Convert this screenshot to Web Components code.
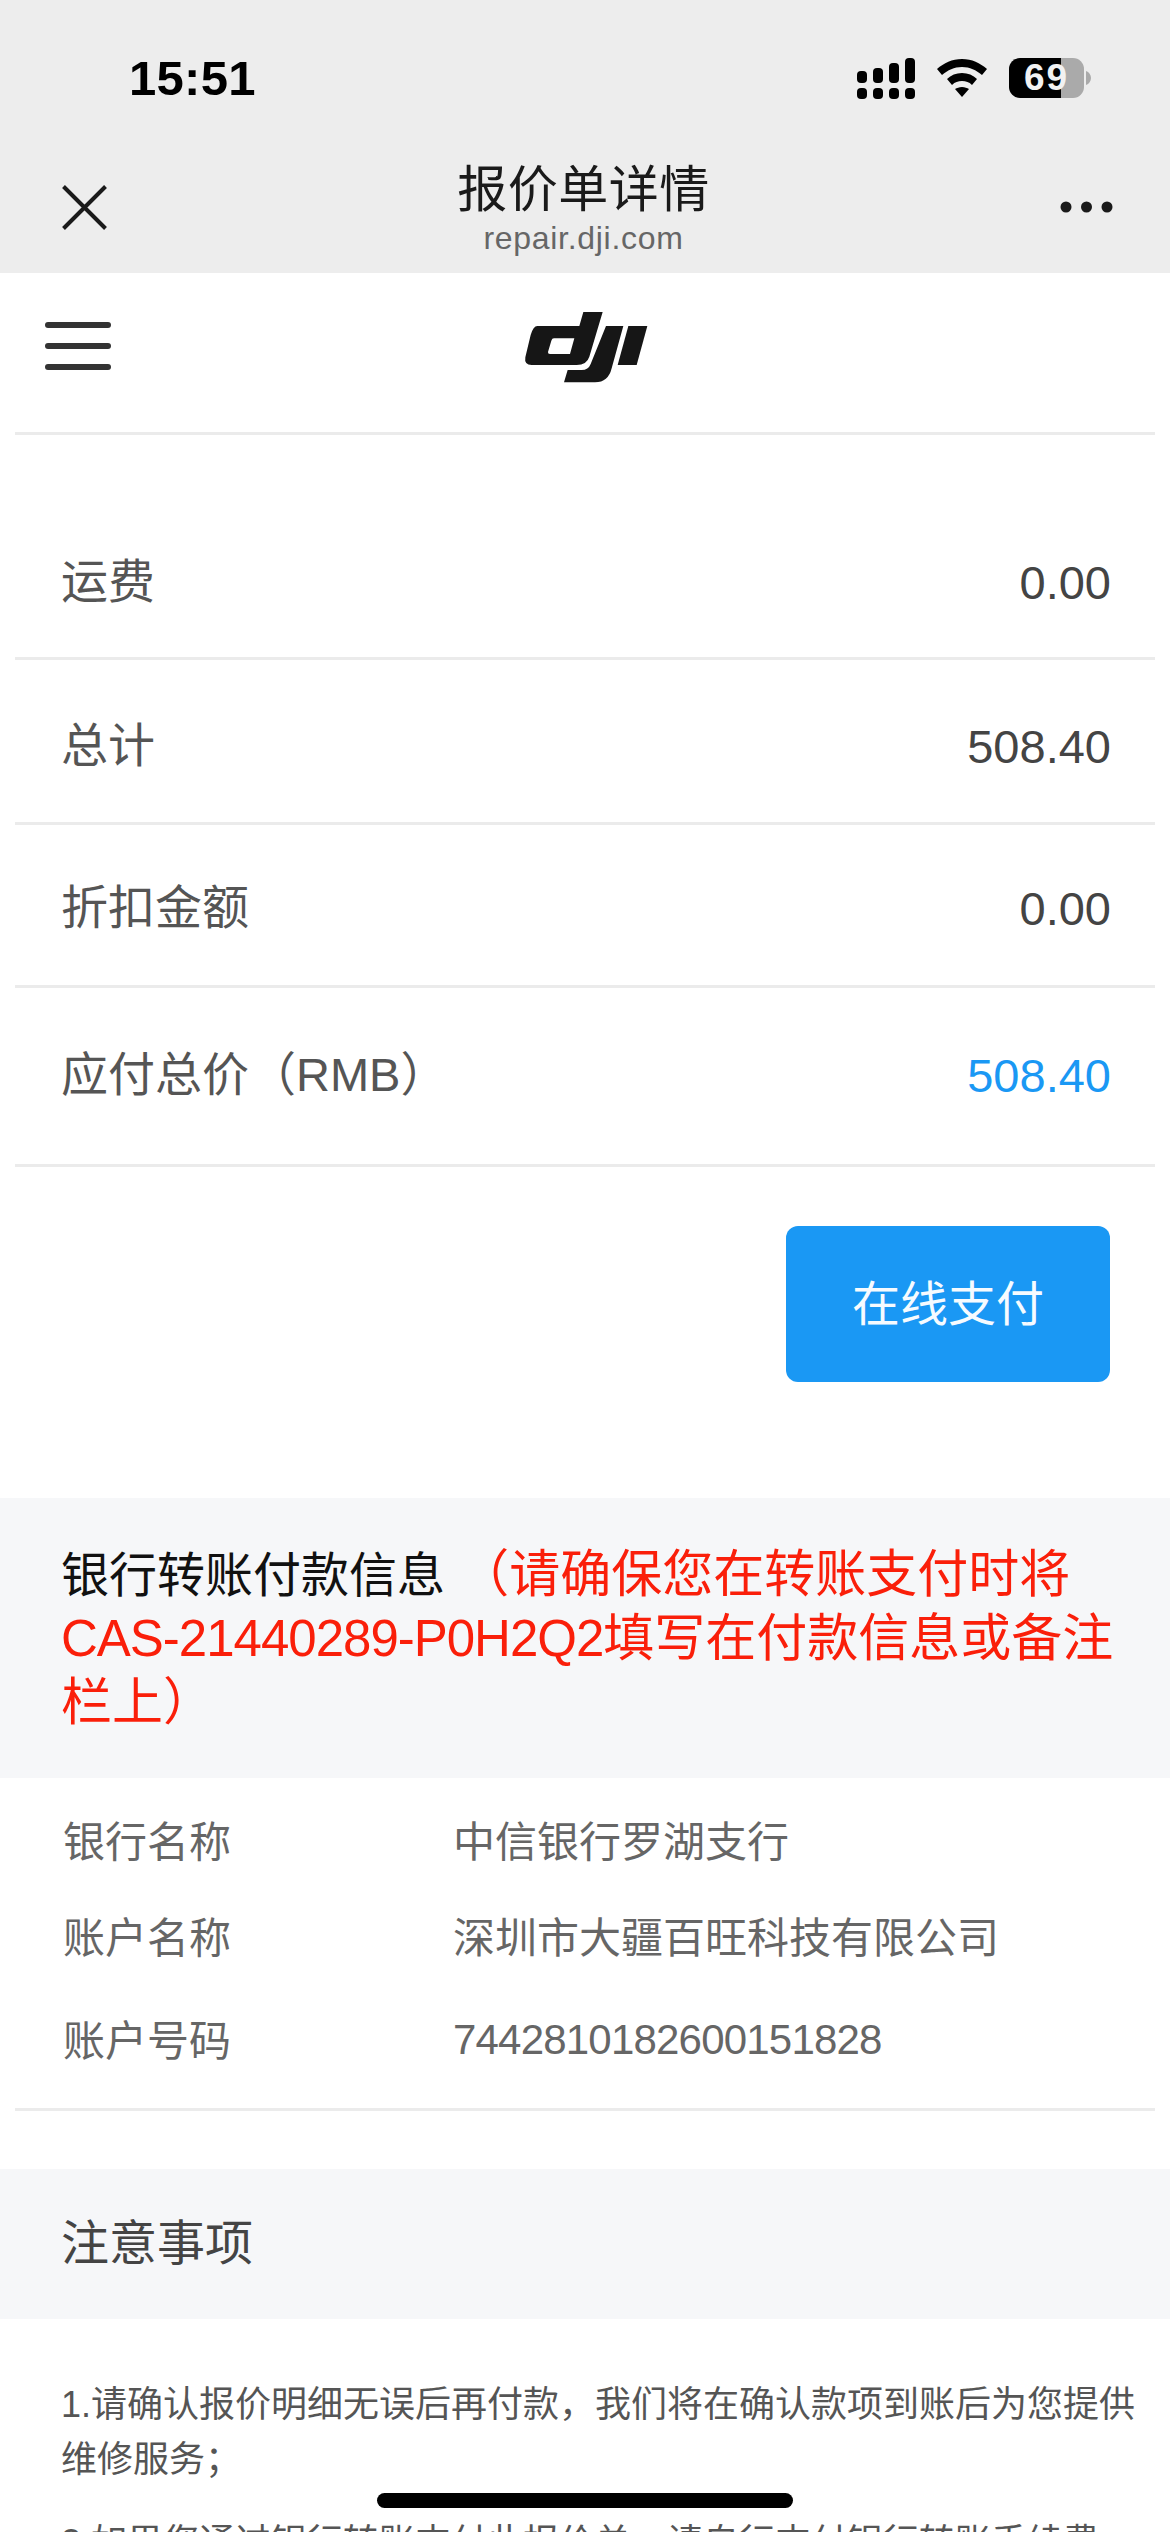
<!DOCTYPE html>
<html lang="zh">
<head>
<meta charset="utf-8">
<title>报价单详情</title>
<style>
  html, body { margin: 0; padding: 0; background: #fff; }
  body { height: 2532px; overflow: hidden; position: relative; font-family: "Liberation Sans", "Noto Sans CJK SC", sans-serif; }
</style>
</head>
<body>
<status-bar></status-bar>
<nav-bar title="报价单详情" host-name="repair.dji.com"></nav-bar>
<site-header></site-header>
<price-row label="运费" value="0.00" h="225" pt="62"></price-row>
<price-row label="总计" value="508.40" h="165"></price-row>
<price-row label="折扣金额" value="0.00" h="163" pb="4"></price-row>
<price-row label="应付总价（RMB）" value="508.40" h="179" pb="11" accent></price-row>
<pay-action>在线支付</pay-action>
<section-head style="margin-top:116px;padding-bottom:43px">
  银行转账付款信息 <span style="color:#fa1f0a;font-size:51px"><span>（请确保您在转账支付时将</span><span style="letter-spacing:-1px">CAS-21440289-P0H2Q2</span><span>填写在付款信息或备注</span><span>栏上）</span></span>
</section-head>
<bank-info></bank-info>
<section-head style="margin-top:58px;color:#444" compact>注意事项</section-head>
<notes-list>
  <p>1.请确认报价明细无误后再付款，我们将在确认款项到账后为您提供维修服务；</p>
  <p>2.如果您通过银行转账支付此报价单，请自行支付银行转账手续费</p>
</notes-list>
<home-bar></home-bar>

<script>
const FONT = `"Liberation Sans", "Noto Sans CJK SC", sans-serif`;

class StatusBar extends HTMLElement {
  constructor() {
    super();
    this.attachShadow({ mode: 'open' }).innerHTML = `
      <style>
        :host { display: flex; align-items: center; justify-content: space-between; height: 156px; box-sizing: border-box; padding: 0 79px 0 129px; background: #ededed; font-family: ${FONT}; }
        .time { font-size: 49px; font-weight: 700; color: #000; letter-spacing: .3px; }
        .icons { display: flex; align-items: center; gap: 22px; }
        .batt { width: 75px; height: 40px; border-radius: 11px; background: linear-gradient(90deg, #000 0 52px, #aaa 52px); display: flex; align-items: center; justify-content: center; color: #f2f2f2; font-size: 37px; font-weight: 700; letter-spacing: 2px; }
        .wrap { display: flex; align-items: center; gap: 2px; }
      </style>
      <span class="time">15:51</span>
      <span class="icons">
        <svg width="58" height="41" viewBox="0 0 58 41" fill="#000">
          <rect x="0" y="13" width="10" height="12" rx="4"/><rect x="16" y="10" width="10" height="15" rx="4"/><rect x="32" y="5" width="10" height="20" rx="4"/><rect x="48" y="0" width="10" height="25" rx="4"/>
          <rect x="0" y="30" width="10" height="11" rx="4"/><rect x="16" y="30" width="10" height="11" rx="4"/><rect x="32" y="30" width="10" height="11" rx="4"/><rect x="48" y="30" width="10" height="11" rx="4"/>
        </svg>
        <svg width="50" height="38" viewBox="0 0 50 38" fill="#000">
          <path d="M25 0C15 0 7 4 0 10l5 6c6-5 12-8 20-8s14 3 20 8l5-6C43 4 35 0 25 0z"/>
          <path d="M25 14c-6 0-11 2-15 6l5 6c3-3 6-4 10-4s7 1 10 4l5-6c-4-4-9-6-15-6z"/>
          <path d="M25 28c-3 0-5 1-7 2l7 8 7-8c-2-1-4-2-7-2z"/>
        </svg>
        <span class="wrap">
          <span class="batt">69</span>
          <svg width="5" height="14" viewBox="0 0 5 14"><path d="M0 0c3 1 5 4 5 7s-2 6-5 7z" fill="#aaa"/></svg>
        </span>
      </span>`;
  }
}

class NavBar extends HTMLElement {
  constructor() {
    super();
    this.attachShadow({ mode: 'open' }).innerHTML = `
      <style>
        :host { display: flex; align-items: center; justify-content: space-between; height: 117px; box-sizing: border-box; padding: 0 57px 0 62px; background: #ededed; font-family: ${FONT}; }
        .mid { flex: 1; align-self: flex-start; padding-top: 4px; display: flex; flex-direction: column; align-items: center; }
        .t { font-size: 50px; line-height: 60px; color: #1a1a1a; letter-spacing: .5px; }
        .h { font-size: 32px; line-height: 36px; color: #666; letter-spacing: .7px; }
        svg { margin-bottom: 15px; }
      </style>
      <svg width="45" height="45" viewBox="0 0 45 45"><path d="M1.5 1.5l42 42M43.5 1.5l-42 42" stroke="#1a1a1a" stroke-width="4" fill="none"/></svg>
      <div class="mid"><div class="t">${this.getAttribute('title')}</div><div class="h">${this.getAttribute('host-name')}</div></div>
      <svg width="53" height="12" viewBox="0 0 53 12" fill="#1a1a1a"><circle cx="6" cy="6" r="5.5"/><circle cx="26.5" cy="6" r="5.5"/><circle cx="47" cy="6" r="5.5"/></svg>`;
  }
}

class SiteHeader extends HTMLElement {
  constructor() {
    super();
    this.attachShadow({ mode: 'open' }).innerHTML = `
      <style>
        :host { display: block; margin: 0 15px; height: 162px; box-sizing: border-box; border-bottom: 3px solid #ebebeb; position: relative; }
        .in { display: flex; align-items: center; height: 145px; padding-left: 30px; }
        .m { display: flex; flex-direction: column; gap: 15px; }
        .m i { display: block; width: 66px; height: 6px; border-radius: 3px; background: #333; }
        .logo { position: absolute; left: 465px; top: 17px; }
      </style>
      <div class="in"><div class="m"><i></i><i></i><i></i></div></div>
      <svg class="logo" width="200" height="120" viewBox="0 0 600 360" fill="#161616">
        <path fill-rule="evenodd" d="M172 108H298L310 66H368L328 200Q320 225 290 225H155Q132 225 136 202L152 135Q160 108 172 108ZM222 145Q216 145 214 152L204 186Q203 192 210 192H270L283 145Z"/>
        <path d="M378 108H430L395 235Q385 277 345 277H252L263 240H305Q325 240 332 222Z"/>
        <path d="M445 108H502L470 225H413Z"/>
      </svg>`;
  }
}

class PriceRow extends HTMLElement {
  constructor() {
    super();
    const accent = this.hasAttribute('accent');
    this.attachShadow({ mode: 'open' }).innerHTML = `
      <style>
        :host { display: flex; justify-content: space-between; align-items: center; margin: 0 15px; padding: ${this.getAttribute('pt') || 0}px 44px ${this.getAttribute('pb') || 0}px 46px; box-sizing: border-box; height: ${this.getAttribute('h')}px; border-bottom: 3px solid #ebebeb; font-family: ${FONT}; font-size: 47px; color: #555; }
        .v { color: ${accent ? '#1a98f4' : '#444'}; margin-top: 10px; }
      </style>
      <span>${this.getAttribute('label')}</span><span class="v">${this.getAttribute('value')}</span>`;
  }
}

class PayAction extends HTMLElement {
  constructor() {
    super();
    this.attachShadow({ mode: 'open' }).innerHTML = `
      <style>
        :host { display: flex; justify-content: flex-end; padding: 59px 60px 0 0; font-family: ${FONT}; }
        .b { width: 324px; height: 156px; box-sizing: border-box; padding-bottom: 8px; border-radius: 12px; background: #1a98f4; color: #f6fbff; font-size: 48px; display: flex; align-items: center; justify-content: center; }
      </style>
      <div class="b"><slot></slot></div>`;
  }
}

class SectionHead extends HTMLElement {
  constructor() {
    super();
    const compact = this.hasAttribute('compact');
    this.attachShadow({ mode: 'open' }).innerHTML = `
      <style>
        :host { display: block; background: #f6f7f9; padding: 45px 50px 45px 61px; font-family: ${FONT}; font-size: 48px; line-height: ${compact ? 60 : 63}px; color: #111; }
      </style>
      <slot></slot>`;
  }
}

class BankInfo extends HTMLElement {
  constructor() {
    super();
    const rows = [['银行名称', '中信银行罗湖支行', 96], ['账户名称', '深圳市大疆百旺科技有限公司', 96], ['账户号码', '7442810182600151828', 110]];
    this.attachShadow({ mode: 'open' }).innerHTML = `
      <style>
        :host { display: block; margin: 0 15px; padding: 12px 0 16px 48px; border-bottom: 3px solid #ebebeb; font-family: ${FONT}; font-size: 42px; color: #666; }
        .r { display: grid; grid-template-columns: 390px 1fr; align-items: center; }
        .num { letter-spacing: -.8px; margin-top: 6px; }
      </style>
      ${rows.map((r, i) => `<div class="r" style="height:${r[2]}px"><span>${r[0]}</span><span class="${i == 2 ? 'num' : ''}">${r[1]}</span></div>`).join('')}`;
  }
}

class NotesList extends HTMLElement {
  constructor() {
    super();
    this.attachShadow({ mode: 'open' }).innerHTML = `
      <style>
        :host { display: block; padding: 58px 26px 0 61px; font-family: ${FONT}; font-size: 36px; line-height: 55px; color: #555; }
        ::slotted(p) { margin: 0 0 28px; }
      </style>
      <slot></slot>`;
  }
}

class HomeBar extends HTMLElement {
  constructor() {
    super();
    this.attachShadow({ mode: 'open' }).innerHTML = `
      <style>
        :host { display: block; position: absolute; left: 377px; top: 2493px; width: 416px; height: 15px; border-radius: 8px; background: #000; }
      </style>`;
  }
}

customElements.define('status-bar', StatusBar);
customElements.define('nav-bar', NavBar);
customElements.define('site-header', SiteHeader);
customElements.define('price-row', PriceRow);
customElements.define('pay-action', PayAction);
customElements.define('section-head', SectionHead);
customElements.define('bank-info', BankInfo);
customElements.define('notes-list', NotesList);
customElements.define('home-bar', HomeBar);
</script>
</body>
</html>
